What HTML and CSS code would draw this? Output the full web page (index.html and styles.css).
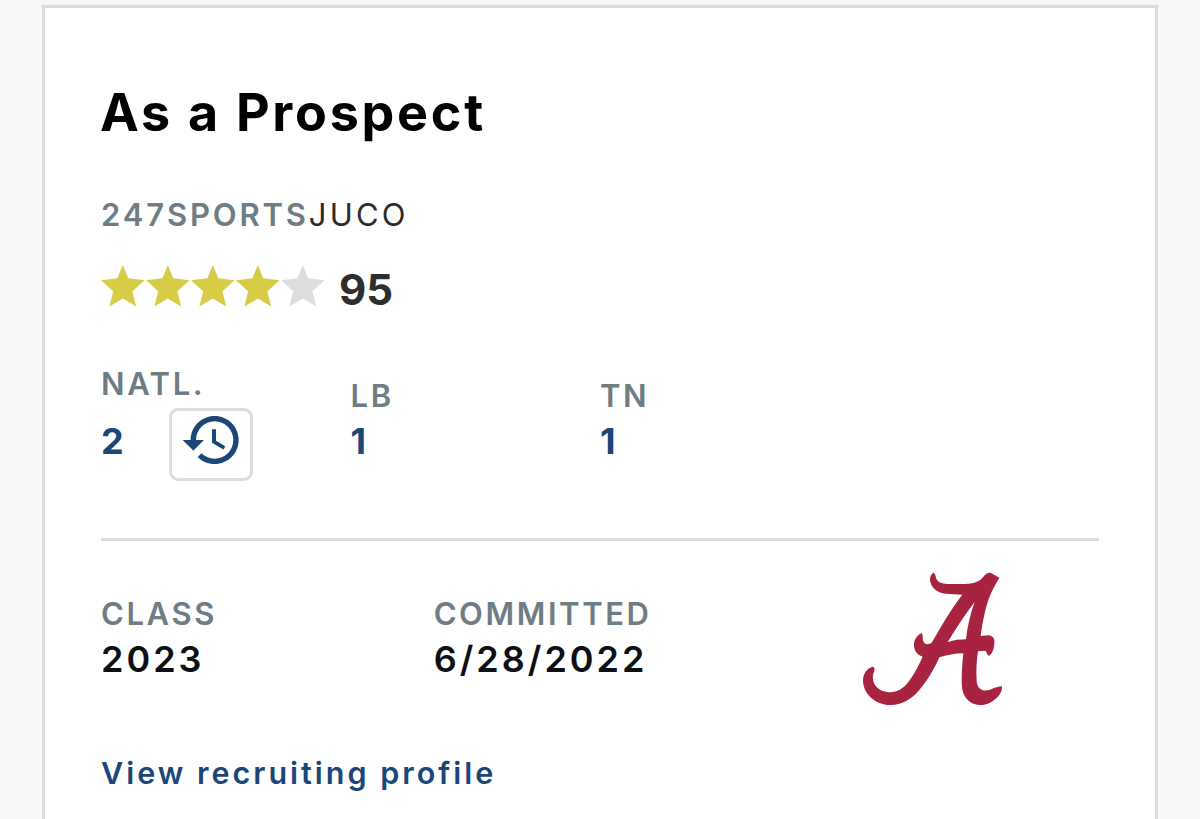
FILE: index.html
```
<!DOCTYPE html>
<html lang="en">
<head>
<meta charset="UTF-8">
<meta name="viewport" content="width=device-width, initial-scale=1.0">
<title>As a Prospect</title>
<link rel="stylesheet" href="styles.css">
</head>
<body>
<svg class="defs" width="0" height="0">
<symbol id="star" viewBox="0 0 44 42">
<polygon points="21.8,0 27.2,13.2 43.6,15.2 31.4,26.2 35.2,41.6 21.8,33.6 8.4,41.6 12.2,26.2 0,15.2 16.4,13.2"/>
</symbol>
</svg>
<section class="card">
<h2 class="title">As a Prospect</h2>
<h3 class="source"><span class="site">247SPORTS</span><span class="juco">JUCO</span></h3>

<div class="rating">
<svg class="star"><use href="#star"/></svg>
<svg class="star"><use href="#star"/></svg>
<svg class="star"><use href="#star"/></svg>
<svg class="star"><use href="#star"/></svg>
<svg class="star empty"><use href="#star"/></svg>
<span class="score">95</span>
</div>

<ul class="ranks">
<li class="natl">
<b class="label">NATL.</b>
<div class="rank-row">
<a href="#" class="rank">2</a>
<a href="#" class="history" aria-label="Ranking history">
<svg width="64" height="64" viewBox="0 0 24 24"><path d="M13 3c-4.97 0-9 4.03-9 9H1l3.89 3.89.07.14L9 12H6c0-3.87 3.13-7 7-7s7 3.13 7 7-3.13 7-7 7c-1.93 0-3.68-.79-4.94-2.06l-1.42 1.42C8.27 19.99 10.51 21 13 21c4.97 0 9-4.03 9-9s-4.03-9-9-9zm-1 5v5l4.28 2.54.72-1.21-3.5-2.08V8H12z"/></svg>
</a>
</div>
</li>
<li>
<b class="label">LB</b>
<a href="#" class="rank">1</a>
</li>
<li>
<b class="label">TN</b>
<a href="#" class="rank">1</a>
</li>
</ul>

<ul class="commit">
<li>
<b class="label">CLASS</b>
<span class="value">2023</span>
</li>
<li>
<b class="label">COMMITTED</b>
<span class="value">6/28/2022</span>
</li>
<li class="team">
<svg width="145" height="138" viewBox="60 30 435 414" role="img" aria-label="Alabama">
<path fill-rule="evenodd" d="M280 38C288 42 286 50 290 58C296 70 310 72 330 72L375 72C400 72 420 66 434 46C442 38 450 36 458 42L478 53C466 74 456 90 448 112C436 144 428 186 422 228L446 226C460 228 465 238 463 250C462 266 458 280 448 287C440 286 442 278 436 272L414 274C410 300 408 330 410 362C411 382 424 394 442 391C456 389 466 380 486 379C488 400 470 418 450 428C432 437 408 438 392 427C372 414 365 394 365 364C365 336 367 306 370 280C344 280 320 285 298 292C284 326 262 362 238 390C212 420 182 436 150 435C106 434 70 402 69 362C69 342 80 324 99 320C107 323 103 332 99 344C95 368 110 392 142 396C190 402 216 358 248 290C230 286 220 268 222 250C224 236 234 224 244 220C251 224 246 234 250 244C254 254 262 254 274 250C302 202 330 152 367 104L330 102C298 102 276 88 271 66C268 54 272 44 280 38ZM404 126C376 162 350 202 323 246C342 240 360 238 378 238C382 200 391 162 404 126Z"/>
</svg>
</li>
</ul>

<a href="#" class="profile-link">View recruiting profile</a>
</section>
</body>
</html>
```
FILE: styles.css
```
* {
box-sizing: border-box;
}
body {
margin: 0;
padding: 5px 42px 0;
background-color: #f7f7f7;
font-family: Inter, "Open Sans", sans-serif;
}
ul {
list-style: none;
margin: 0;
padding: 0;
}
a {
color: #1b4678;
text-decoration: none;
}
.defs {
display: block;
}
.card {
height: 814px;
padding: 75px 56px 0;
background-color: #fff;
border: 3px solid #dcdcdc;
border-bottom: none;
}
.title {
margin: 0 0 0 -1px;
font-size: 52px;
line-height: 60px;
font-weight: 700;
letter-spacing: 2.75px;
color: #000;
}
.source {
display: flex;
margin: 52px 0 0;
font-size: 31px;
line-height: 40px;
letter-spacing: 2.85px;
}
.site {
font-weight: 600;
color: #6e7c84;
}
.juco {
font-weight: 400;
letter-spacing: 3.2px;
color: #2b2b2b;
}
.rating {
display: flex;
margin-top: 30px;
height: 46px;
gap: 1px;
}
.star {
width: 44px;
height: 42px;
fill: #d8cb45;
}
.star.empty {
fill: #dddddd;
}
.score {
margin-left: 13px;
font-size: 42px;
line-height: 50px;
font-weight: 700;
color: #2e2e2e;
}
.ranks {
display: grid;
grid-template-columns: repeat(4, 1fr);
height: 230px;
padding-top: 64px;
border-bottom: 3px solid #dcdcdc;
}
.label {
display: block;
font-size: 31px;
line-height: 41px;
font-weight: 600;
letter-spacing: 2.6px;
color: #6e7c84;
}
.rank {
display: block;
font-size: 36px;
line-height: 51px;
font-weight: 700;
}
.natl {
margin-top: -12px;
}
.rank-row {
display: flex;
padding-top: 4px;
}
.rank-row .rank {
width: 68px;
line-height: 67px;
}
.history {
display: flex;
width: 84px;
height: 73px;
padding-left: 8px;
border: 3px solid #dcdcdc;
border-radius: 9px;
}
.history svg {
margin-top: -3px;
fill: #1b4678;
}
.commit {
display: grid;
grid-template-columns: repeat(3, 1fr);
height: 168px;
padding-top: 52px;
}
.value {
display: block;
font-size: 36px;
line-height: 51px;
font-weight: 600;
letter-spacing: 3px;
color: #0c1014;
}
.team {
display: flex;
justify-content: center;
margin-top: -23px;
}
.team svg {
fill: #a8233f;
}
.profile-link {
display: block;
margin-top: 43px;
font-size: 30.5px;
line-height: 42px;
font-weight: 600;
letter-spacing: 3px;
}
```
